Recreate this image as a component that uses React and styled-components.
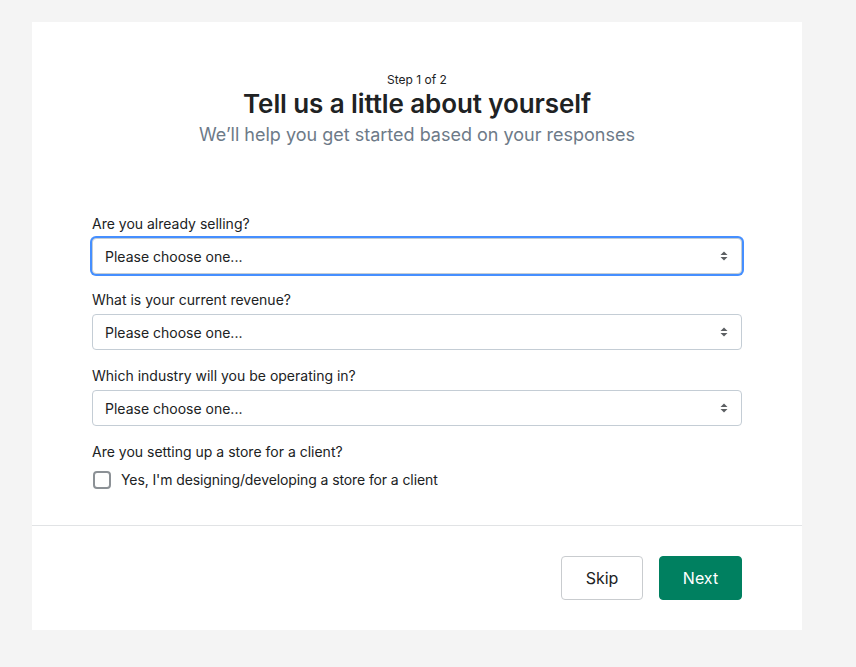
import React, { useState } from 'react';
import styled, { createGlobalStyle } from 'styled-components';

const GlobalStyle = createGlobalStyle`
    html, body {
        margin: 0;
        padding: 0;
        background: #f4f4f4;
        font-family: Inter, "Liberation Sans", sans-serif;
        color: #202223;
    }
    * { box-sizing: border-box; }
`

const Page = styled.div`
    padding: 22px 0 0 32px;
    min-height: 667px;
`

const Card = styled.div`
    width: 770px;
    background: #fff;
`

const Body = styled.div`
    padding: 50px 60px 35px;
`

const Header = styled.div`
    display: flex;
    flex-direction: column;
    align-items: center;
    text-align: center;
    margin-bottom: 67px;
`

const Step = styled.div`
    font-size: 12px;
    line-height: 16px;
    margin-bottom: 1px;
`

const Title = styled.h1`
    margin: 0;
    font-size: 26px;
    line-height: 30px;
    font-weight: 600;
    letter-spacing: -0.1px;
`

const Subtitle = styled.p`
    margin: 4px 0 0;
    font-size: 18px;
    line-height: 24px;
    color: #6d7a88;
`

const Fields = styled.div`
    display: flex;
    flex-direction: column;
    gap: 16px;
`

const Field = styled.div`
    display: flex;
    flex-direction: column;
    gap: ${p => p.$gap || 4}px;
`

const Label = styled.label`
    font-size: 14px;
    line-height: 20px;
`

const SelectBox = styled.div`
    position: relative;
    height: 36px;
    border: 1px solid #c4cdd5;
    border-radius: 4px;
    background: #fff;
    box-shadow: ${p => p.$focused ? '0 0 0 2px #458fff' : 'none'};
    display: flex;
    align-items: center;
    padding: 0 12px;
    font-size: 14px;
    color: #202223;
`

const Arrows = styled.svg`
    position: absolute;
    right: 12px;
    top: 50%;
    transform: translateY(-50%);
`

const CheckRow = styled.label`
    display: flex;
    align-items: center;
    gap: 10px;
    font-size: 14px;
    line-height: 20px;
    letter-spacing: -0.1px;
`

const Box = styled.span`
    width: 18px;
    height: 18px;
    margin-left: 1px;
    border: 2px solid #8c9196;
    border-radius: 4px;
    background: #fff;
`

const Footer = styled.div`
    border-top: 1px solid #e1e3e5;
    padding: 30px 60px 30px;
    display: flex;
    justify-content: flex-end;
    gap: 16px;
`

const Button = styled.button`
    height: 44px;
    width: ${p => p.$primary ? 83 : 82}px;
    padding: 0;
    border-radius: 4px;
    font-family: inherit;
    font-size: 16px;
    cursor: pointer;
    border: 1px solid ${p => p.$primary ? '#008060' : '#c9cccf'};
    background: ${p => p.$primary ? '#008060' : '#fff'};
    color: ${p => p.$primary ? '#fff' : '#202223'};
`

const Select = ({ focused }) => (
    <SelectBox $focused={focused}>
        Please choose one...
        <Arrows width="10" height="12" viewBox="0 0 10 12">
            <path d="M5 1.5 L8.5 5 H1.5 Z" fill="#5c5f62" />
            <path d="M5 10.5 L8.5 7 H1.5 Z" fill="#5c5f62" />
        </Arrows>
    </SelectBox>
)

const App = () => {
    const [checked] = useState(false);

    return (
        <Page>
            <GlobalStyle />
            <Card>
                <Body>
                    <Header>
                        <Step>Step 1 of 2</Step>
                        <Title>Tell us a little about yourself</Title>
                        <Subtitle>We’ll help you get started based on your responses</Subtitle>
                    </Header>

                    <Fields>
                        <Field>
                            <Label>Are you already selling?</Label>
                            <Select focused />
                        </Field>
                        <Field>
                            <Label>What is your current revenue?</Label>
                            <Select />
                        </Field>
                        <Field>
                            <Label>Which industry will you be operating in?</Label>
                            <Select />
                        </Field>
                        <Field $gap={8}>
                            <Label>Are you setting up a store for a client?</Label>
                            <CheckRow>
                                <Box data-checked={checked} />
                                Yes, I'm designing/developing a store for a client
                            </CheckRow>
                        </Field>
                    </Fields>
                </Body>
                <Footer>
                    <Button type="button">Skip</Button>
                    <Button type="button" $primary>Next</Button>
                </Footer>
            </Card>
        </Page>
    );
};

export default App;
